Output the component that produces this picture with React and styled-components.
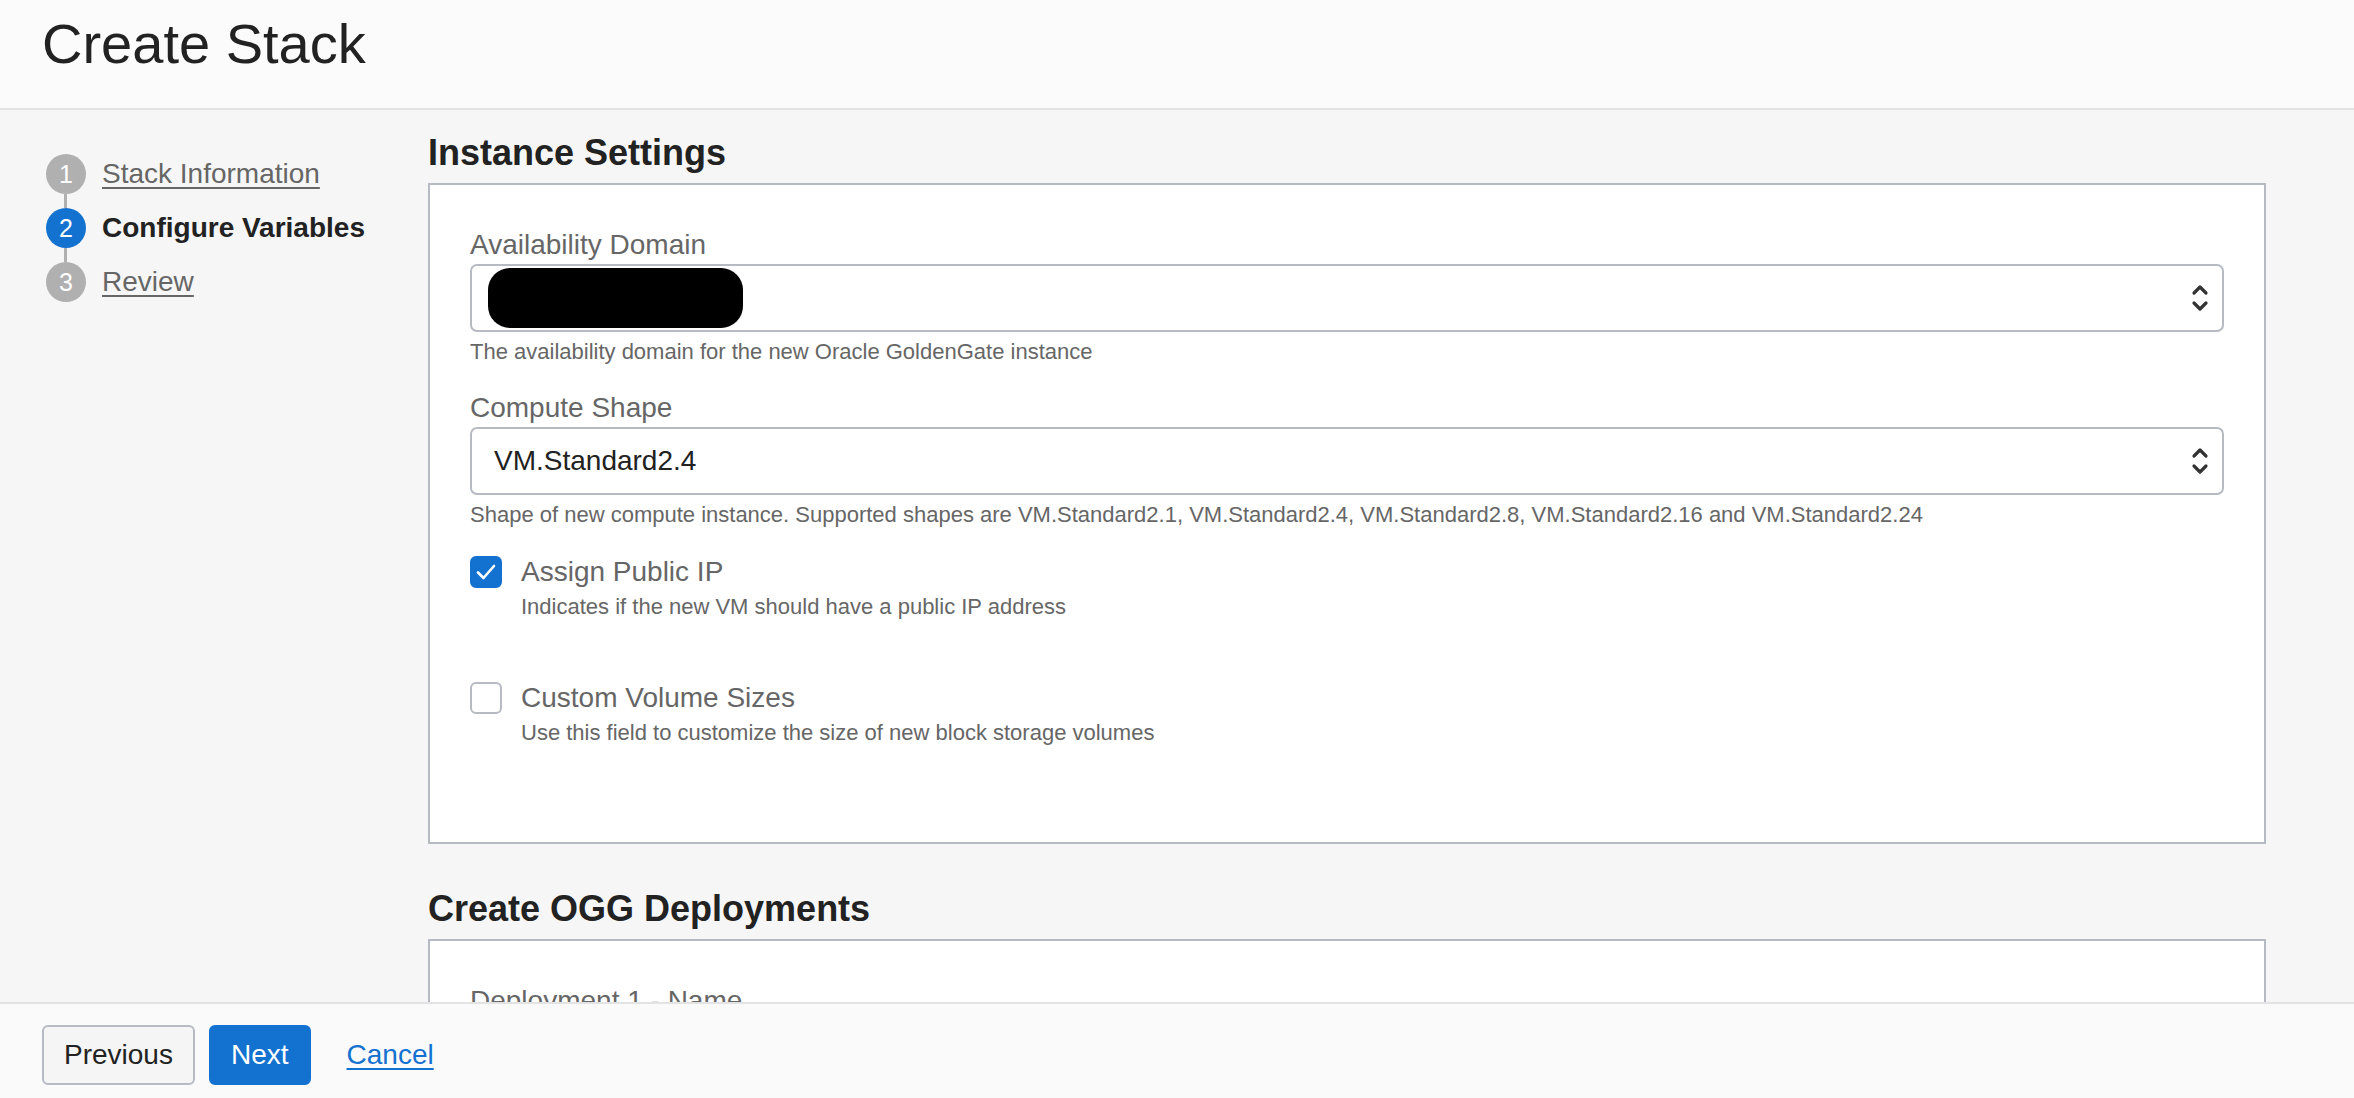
import styled, { createGlobalStyle } from 'styled-components';

const GlobalStyle = createGlobalStyle`
  html, body {
    margin: 0;
    padding: 0;
    height: 100%;
    overflow: hidden;
  }
  body {
    font-family: "Liberation Sans", Arial, Helvetica, sans-serif;
    color: #222;
    background: #f6f6f6;
  }
`

const Page = styled.div`
  height: 100vh;
  display: flex;
  flex-direction: column;
`

const Header = styled.header`
  flex: none;
  height: 97px;
  padding: 11px 42px 0;
  background: #fbfbfb;
  border-bottom: 2px solid #e3e3e3;
`

const PageTitle = styled.h1`
  margin: 0;
  font-size: 56px;
  font-weight: 400;
  line-height: normal;
  color: #222;
`

const Body = styled.div`
  flex: 1;
  min-height: 0;
  overflow: hidden;
  display: grid;
  grid-template-columns: 428px 1838px;
  background: #f6f6f6;
`

const Steps = styled.ol`
  list-style: none;
  margin: 0;
  padding: 44px 0 0 46px;
  display: flex;
  flex-direction: column;
`

const Step = styled.li`
  display: flex;
  align-items: center;
  gap: 16px;
  height: 40px;
`

const StepNumber = styled.span`
  width: 40px;
  height: 40px;
  border-radius: 50%;
  flex: none;
  display: flex;
  align-items: center;
  justify-content: center;
  font-size: 25px;
  color: #fff;
  background: ${(p) => (p.$active ? '#1371d0' : '#b0b0b0')};
`

const StepLabel = styled.span`
  font-size: 28px;
  color: ${(p) => (p.$active ? '#222' : '#666')};
  font-weight: ${(p) => (p.$active ? 700 : 400)};
  text-decoration: ${(p) => (p.$active ? 'none' : 'underline')};
  text-underline-offset: 4px;
  text-decoration-thickness: 2px;
`

const Connector = styled.span`
  width: 3px;
  height: 14px;
  margin-left: 18px;
  background: #b0b0b0;
`

const Content = styled.main`
  padding-top: 22px;
`

const SectionTitle = styled.h2`
  margin: 0 0 9px;
  font-size: 36px;
  font-weight: 700;
  line-height: normal;
  color: #222;
`

const Card = styled.section`
  background: #fff;
  border: 2px solid #b6bbc3;
  padding: 44px 40px 96px;
`

const Field = styled.div`
  display: flex;
  flex-direction: column;
  margin-bottom: ${(p) => p.$gap || '0'};
`

const Label = styled.label`
  font-size: 28px;
  color: #666;
  line-height: normal;
  margin-bottom: 3px;
`

const Select = styled.div`
  height: 64px;
  border: 2px solid #b6bbc3;
  border-radius: 7px;
  background: #fff;
  display: flex;
  align-items: center;
  justify-content: space-between;
  padding: 0 12px 0 22px;
  font-size: 28px;
  color: #222;
`

const Redacted = styled.span`
  width: 255px;
  height: 60px;
  margin-left: -6px;
  border-radius: 22px;
  background: #000;
`

const Help = styled.div`
  margin-top: 7px;
  font-size: 22px;
  color: #666;
  line-height: normal;
`

const CheckRow = styled.div`
  display: grid;
  grid-template-columns: 32px 1fr;
  column-gap: 19px;
  align-items: center;
  margin-bottom: ${(p) => p.$gap || '0'};
`

const Box = styled.span`
  width: 32px;
  height: 32px;
  box-sizing: border-box;
  border-radius: 6px;
  display: flex;
  align-items: center;
  justify-content: center;
  background: ${(p) => (p.$checked ? '#1371d0' : '#fff')};
  border: 2px solid ${(p) => (p.$checked ? '#1371d0' : '#b6bbc3')};
`

const CheckLabel = styled.span`
  font-size: 28px;
  color: #666;
  line-height: normal;
`

const CheckHelp = styled.span`
  grid-column: 2;
  margin-top: 6px;
  font-size: 22px;
  color: #666;
  line-height: normal;
`

const Section = styled.div`
  margin-bottom: 44px;
`

const Footer = styled.footer`
  flex: none;
  height: 96px;
  box-sizing: border-box;
  border-top: 2px solid #e3e3e3;
  background: #fafafa;
  padding: 21px 42px 0;
  display: flex;
  align-items: flex-start;
  gap: 14px;
`

const Button = styled.button`
  height: 60px;
  padding: 0 20px;
  border-radius: 6px;
  font-family: inherit;
  font-size: 28px;
  cursor: pointer;
  color: ${(p) => (p.$primary ? '#fff' : '#222')};
  background: ${(p) => (p.$primary ? '#1371d0' : '#f5f5f5')};
  border: 2px solid ${(p) => (p.$primary ? '#1371d0' : '#b6bbc3')};
`

const CancelLink = styled.a`
  margin-left: 22px;
  line-height: 60px;
  font-size: 28px;
  color: #1371d0;
  text-decoration: underline;
  text-underline-offset: 4px;
  text-decoration-thickness: 2px;
  cursor: pointer;
`

const Chevrons = () => (
  <svg width="20" height="32" viewBox="0 0 20 32" fill="none" stroke="#333" strokeWidth="3.2" strokeLinecap="round" strokeLinejoin="round">
    <path d="M4 11 L10 5 L16 11" />
    <path d="M4 21 L10 27 L16 21" />
  </svg>
)

const Check = () => (
  <svg width="22" height="22" viewBox="0 0 22 22" fill="none" stroke="#fff" strokeWidth="2.6" strokeLinecap="round" strokeLinejoin="round">
    <path d="M3 11.5 L8.5 17 L19 5" />
  </svg>
)

const steps = ['Stack Information', 'Configure Variables', 'Review']

export default function App() {
  const active = 1

  return (
    <Page>
      <GlobalStyle />
      <Header>
        <PageTitle>Create Stack</PageTitle>
      </Header>
      <Body>
        <Steps>
          {steps.map((step, i) => (
            <li key={step} style={{ display: 'contents' }}>
              {i > 0 && <Connector />}
              <Step as="div">
                <StepNumber $active={i === active}>{i + 1}</StepNumber>
                <StepLabel $active={i === active}>{step}</StepLabel>
              </Step>
            </li>
          ))}
        </Steps>
        <Content>
          <Section>
            <SectionTitle>Instance Settings</SectionTitle>
            <Card>
              <Field $gap="27px">
                <Label>Availability Domain</Label>
                <Select>
                  <Redacted />
                  <Chevrons />
                </Select>
                <Help>The availability domain for the new Oracle GoldenGate instance</Help>
              </Field>
              <Field $gap="28px">
                <Label>Compute Shape</Label>
                <Select>
                  <span>VM.Standard2.4</span>
                  <Chevrons />
                </Select>
                <Help>
                  Shape of new compute instance. Supported shapes are VM.Standard2.1, VM.Standard2.4,
                  VM.Standard2.8, VM.Standard2.16 and VM.Standard2.24
                </Help>
              </Field>
              <CheckRow $gap="62px">
                <Box $checked>
                  <Check />
                </Box>
                <CheckLabel>Assign Public IP</CheckLabel>
                <CheckHelp>Indicates if the new VM should have a public IP address</CheckHelp>
              </CheckRow>
              <CheckRow>
                <Box />
                <CheckLabel>Custom Volume Sizes</CheckLabel>
                <CheckHelp>Use this field to customize the size of new block storage volumes</CheckHelp>
              </CheckRow>
            </Card>
          </Section>
          <Section>
            <SectionTitle>Create OGG Deployments</SectionTitle>
            <Card>
              <Field>
                <Label>Deployment 1 - Name</Label>
                <Select />
              </Field>
            </Card>
          </Section>
        </Content>
      </Body>
      <Footer>
        <Button>Previous</Button>
        <Button $primary>Next</Button>
        <CancelLink>Cancel</CancelLink>
      </Footer>
    </Page>
  )
}
